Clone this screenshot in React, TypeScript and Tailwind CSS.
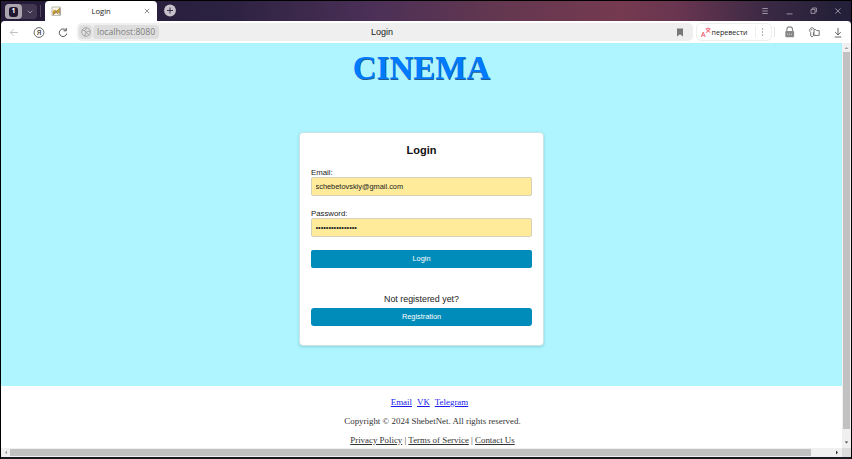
import React from "react";

const arial = "font-['Liberation_Sans',Arial,sans-serif]";

function TabBar() {
  return (
    <div className="flex h-[20px] items-end bg-[linear-gradient(90deg,#251b38_0%,#2b2140_26%,#4c3057_44%,#633750_58%,#753a4f_73%,#683550_80%,#3b2944_90%,#252039_98%)]">
      <div className="mb-[2px] ml-[4px] flex h-[15px] w-[32px] items-center rounded-[4px] bg-[#413750]">
        <div className="flex h-[15px] w-[17px] items-center justify-center rounded-[4px] bg-[#aaa4af]">
          <div className="flex h-[10px] w-[9px] items-center justify-center rounded-[3px] bg-[#21172f] font-['Open_Sans',sans-serif] text-[7px] font-bold text-white">1</div>
        </div>
        <svg className="ml-[5px]" width="6" height="4" viewBox="0 0 6 4" fill="none" stroke="#a79faf" strokeWidth="0.9"><path d="M.7.7 3 3 5.3.7" /></svg>
      </div>
      <div className="mb-[4px] ml-[3px] h-[12px] w-px bg-[#51465f]" />
      <div className="ml-[4px] flex h-[20px] w-[112px] items-center rounded-t-[4px] bg-white">
        <svg className="ml-[6px]" width="11" height="11" viewBox="0 0 11 11">
          <path d="M1 1h8.5v8.5H1z" fill="#faf6e5" stroke="#a5a29a" strokeWidth=".7" />
          <path d="m1.4 6.3 1.6-2.6 2.2 1.5L8.8 1.6 8.4 7.6 5.5 6.6 1.8 8.7Z" fill="#c89a32" />
          <path d="m2 8.8 3-2.5 2.5 2M4 4.4l2 1M8.7 2.2 9 9" stroke="#716658" strokeWidth=".7" fill="none" />
        </svg>
        <span className="ml-[29.5px] w-[30.5px] font-['Open_Sans',sans-serif] text-[7.6px] leading-[12px] text-[#222]">Login</span>
        <svg className="ml-[22px]" width="6" height="6" viewBox="0 0 6 6" stroke="#777" strokeWidth=".8"><path d="m.8.8 4.4 4.4M5.2.8.8 5.2" /></svg>
      </div>
      <svg className="mb-[4px] ml-[7px]" width="12" height="13" viewBox="0 0 12 13">
        <circle cx="6" cy="6.5" r="5.9" fill="#c6c1ca" /><path d="M6 3.5v6M3 6.5h6" stroke="#3a304a" strokeWidth="1" />
      </svg>
      <div className="grow" />
      <svg width="89" height="20" viewBox="0 0 89 20" fill="none" stroke="#aaa2af" strokeWidth=".85">
        <path d="M.3 7.5h5.5M.3 10h5.5M.3 12.5h5.5M24.5 12.9h6M49 8.4h4v4h-4zM50.4 8.2V7h4v4h-1.2M73.3 7.4l5.2 5.2M78.5 7.4l-5.2 5.2" />
      </svg>
    </div>
  );
}

function Toolbar() {
  return (
    <div className="bg-[#3b2944]">
      <div className="flex h-[22px] items-center rounded-t-[4px] bg-white">
        <svg width="76" height="20" viewBox="0 0 76 20" fill="none">
          <path d="M17 10.5H9.3M12.6 7.2 9.3 10.5l3.3 3.3" stroke="#bbb" strokeWidth=".9" />
          <circle cx="38" cy="10.5" r="4.9" stroke="#555" strokeWidth=".9" />
          <path d="M64.9 8.2A3.8 3.8 0 1 0 65.8 11.5M65.3 6.1V8.8H62.6" stroke="#555" strokeWidth="1" />
          <text x="35.7" y="13.2" fill="#444" fontSize="7.4" fontFamily="Open Sans" fontWeight="600">Я</text>
        </svg>
        <div className="flex h-[18px] w-[616px] items-center rounded-[5px] bg-[#efefef]">
          <div className="ml-[2px] flex h-[14px] w-[13px] items-center justify-center rounded-[4px] bg-[#dedede]">
            <svg width="10" height="10" viewBox="0 0 10 10" fill="none" stroke="#999" strokeWidth=".8">
              <circle cx="5" cy="5" r="4.3" /><path d="m1 3.3 3 .2L5.5 1M3.5 3.5 5 5.2 8.8 4M5 5.2 3.6 9M5 5.2l2.7 2.6" />
            </svg>
          </div>
          <div className="ml-px h-[14px] w-[66px] whitespace-nowrap rounded-[4px] bg-[#dedede] pl-[4px] font-['Open_Sans',sans-serif] text-[8.65px] leading-[15px] text-[#808080]">localhost:8080</div>
          <div className={`${arial} ml-[212px] grow text-[9px] leading-[12px] text-[#222]`}>Login</div>
          <svg className="mr-[10px]" width="6" height="9" viewBox="0 0 6 9"><path d="M0 .6h6v8L3 6.2 0 8.6z" fill="#777" /></svg>
        </div>
        <div className="ml-[3px] flex h-[18px] w-[76px] items-center rounded-[5px] border border-[#eee]">
          <svg className="ml-[4px] shrink-0" width="11" height="11" viewBox="0 0 11 11">
            <text x="0" y="9.5" fontSize="6.8" fontFamily="Open Sans" fontWeight="600" fill="#f05265">A</text>
            <path d="M4.7 1.8h4.6M7 .6v1.2M5 5.4c1.8-.3 3.2-1.8 3.5-3.5M5.3 2.8 9.3 5.5" stroke="#f05265" strokeWidth=".9" fill="none" />
          </svg>
          <span className="-ml-[0.5px] w-[43px] whitespace-nowrap font-['Open_Sans',sans-serif] text-[7.1px] leading-[12px] text-[#222]">перевести</span>
          <div className="h-[12px] w-px bg-[#eee]" />
          <svg className="ml-[5px]" width="3" height="8" viewBox="0 0 3 8" fill="#888"><circle cx="1.5" cy="1" r=".7" /><circle cx="1.5" cy="4" r=".7" /><circle cx="1.5" cy="7" r=".7" /></svg>
        </div>
        <div className="ml-[2px] h-[10px] w-px bg-[#e5e5e5]" />
        <svg width="76" height="20" viewBox="0 0 76 20" fill="none">
          <path d="M11.8 9V7.8a2.9 2.9 0 0 1 5.8 0V9" stroke="#888" strokeWidth="1.1" />
          <rect x="10.3" y="9" width="8.8" height="6.3" rx="1" fill="#888" />
          <path d="M12.3 12.2h4.8" stroke="#ddd" strokeWidth="1" strokeDasharray="1 .8" />
          <path d="M35.7 10.4A2.7 2.7 0 0 1 36.8 5.7a2.7 2.7 0 0 1 2.4 1.5M35.7 10.4v3.5l1.3 1.1 1.4-1.3v-3.3" stroke="#666" strokeWidth=".9" />
          <path d="M39 7.6h1.8l.9 1h2.5v4.8H39z" stroke="#666" strokeWidth=".9" />
          <circle cx="36.7" cy="7.6" r=".6" fill="#666" />
          <path d="M63 6v7M60.2 10.2 63 12.9l2.8-2.7M59.7 15h6.6" stroke="#555" strokeWidth=".9" />
        </svg>
      </div>
    </div>
  );
}

function Field({ label, value }: { label: string; value: string }) {
  return (
    <label className="block h-[41px] shrink-0 text-[7.8px] text-[#222]">
      <span className="block h-[10px] leading-[12px]">{label}</span>
      <input
        defaultValue={value}
        className="block h-[19px] w-full rounded-[2px] border border-[#d6d0bb] bg-[#ffeb99] px-[3.5px] text-[7.4px] text-[#222] outline-none"
      />
    </label>
  );
}

function LoginCard() {
  return (
    <div className={`${arial} mx-auto flex h-[214px] w-[245px] flex-col rounded-[4px] border border-[#cbe4e6] bg-white px-[11px] pt-[10px] text-[#222] shadow-[0_1px_3px_rgba(0,80,90,0.22)]`}>
      <h2 className="h-[24px] shrink-0 text-center text-[11px] font-bold leading-[15px] text-[#111]">Login</h2>
      <Field label="Email:" value="schebetovskiy@gmail.com" />
      <Field label="Password:" value="••••••••••••••••" />
      <button className="mt-px h-[18px] w-full shrink-0 rounded-[2px] bg-[#008cba] text-[7.35px] leading-[18px] text-white">Login</button>
      <p className="mt-[24px] h-[15.5px] text-center text-[8.9px] leading-[15px]">Not registered yet?</p>
      <button className="h-[18px] w-full shrink-0 rounded-[3px] bg-[#008cba] text-[7.35px] leading-[18px] text-white">Registration</button>
    </div>
  );
}

function Footer() {
  return (
    <footer className="h-[62px] bg-white pl-[22px] pt-[10px] text-center font-['Liberation_Serif',serif] text-[8.9px] leading-[12px] text-[#333]">
      <div className="flex justify-center gap-[5px] pr-[6px] text-[#1a1aee]">
        <a className="underline">Email</a>
        <a className="underline">VK</a>
        <a className="underline">Telegram</a>
      </div>
      <p className="mt-[7px]">Copyright © 2024 ShebetNet. All rights reserved.</p>
      <p className="mt-[7px]"><a className="underline">Privacy Policy</a> | <a className="underline">Terms of Service</a> | <a className="underline">Contact Us</a></p>
    </footer>
  );
}

export default function App() {
  return (
    <div className="h-[459px] w-[852px] overflow-hidden bg-black pl-px pr-px pt-px">
      <TabBar />
      <Toolbar />
      <div className="flex h-[405px]">
        <main className="w-[841px] bg-white">
          <div className="h-[343px] bg-[#aff5ff]">
            <h1 className="h-[89px] pt-[6px] text-center font-['Liberation_Serif',serif] text-[33px] font-bold leading-[38px] text-[#007bff] [text-shadow:0.6px_0.6px_0.5px_#245e8e]">CINEMA</h1>
            <LoginCard />
          </div>
          <Footer />
        </main>
        <div className="flex w-[9px] flex-col items-center bg-[#f0f0f0]">
          <svg className="h-[9px] shrink-0" width="9" height="9" viewBox="0 0 9 9"><path d="m2.8 6 1.7-2 1.7 2z" fill="#999" /></svg>
          <div className="h-[377px] w-[7px] bg-[#c1c1c1]" />
          <svg className="mt-[9px]" width="9" height="9" viewBox="0 0 9 9"><path d="m2.8 3.5 1.7 2 1.7-2z" fill="#444" /></svg>
        </div>
      </div>
      <div className="flex h-[9px] items-center bg-[#f0f0f0]">
        <svg width="9" height="9" viewBox="0 0 9 9"><path d="M6 2.7 4 4.5l2 1.8z" fill="#999" /></svg>
        <div className="h-[7px] w-[801px] bg-[#c1c1c1]" />
        <svg className="ml-[22px]" width="9" height="9" viewBox="0 0 9 9"><path d="m3 2.5 2 2-2 2z" fill="#333" /></svg>
        <div className="ml-auto h-[9px] w-[9px] bg-[#dcdcdc]" />
      </div>
      <div className="h-[2px] bg-[#171a20]" />
    </div>
  );
}
